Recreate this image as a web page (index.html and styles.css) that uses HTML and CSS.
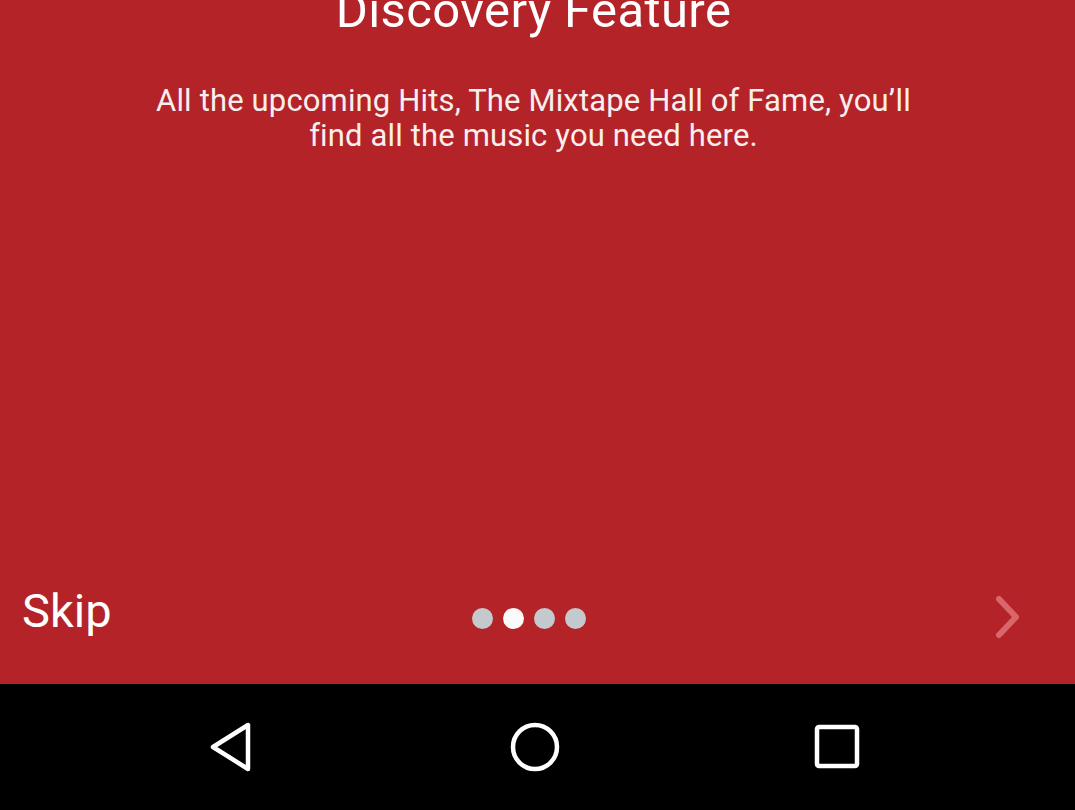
FILE: index.html
```html
<!DOCTYPE html>
<html>
<head>
<meta charset="utf-8">
<link rel="stylesheet" href="styles.css">
</head>
<body>
<div class="screen">
  <main class="slide">
    <h1 class="title">Discovery Feature</h1>
    <p class="desc">All the upcoming Hits, The Mixtape Hall of Fame, you’ll<br>find all the music you need here.</p>
  </main>
  <div class="footer">
    <span class="skip">Skip</span>
    <div class="dots">
      <span class="dot"></span>
      <span class="dot active"></span>
      <span class="dot"></span>
      <span class="dot"></span>
    </div>
    <svg class="next" width="30" height="46" viewBox="0 0 30 46"><path d="M6 5 L23 23 L6 41" fill="none" stroke="currentColor" stroke-width="6" stroke-linecap="round" stroke-linejoin="round"/></svg>
  </div>
  <nav class="navbar">
    <svg class="nav-icon" width="50" height="52" viewBox="0 0 50 52"><path d="M41 4 L41 48 L6 26 Z" fill="none" stroke="#fff" stroke-width="4.5" stroke-linejoin="round"/></svg>
    <svg class="nav-icon" width="52" height="52" viewBox="0 0 52 52"><circle cx="26" cy="26" r="22" fill="none" stroke="#fff" stroke-width="4.5"/></svg>
    <svg class="nav-icon" width="50" height="50" viewBox="0 0 50 50"><rect x="5" y="5" width="40" height="39" rx="2" fill="none" stroke="#fff" stroke-width="4.5"/></svg>
  </nav>
</div>
</body>
</html>
```
FILE: styles.css
```css
html, body {
  margin: 0;
  padding: 0;
  background: #000;
}
.screen {
  width: 1075px;
  height: 810px;
  display: flex;
  flex-direction: column;
  font-family: Roboto, "Noto Sans", sans-serif;
  color: #fff;
  overflow: hidden;
}
.slide {
  background: #b32328;
  height: 574px;
  display: flex;
  flex-direction: column;
  align-items: center;
  padding-right: 8px;
}
.title {
  margin: -19px 0 0;
  font-size: 49px;
  font-weight: 400;
  line-height: 60px;
  letter-spacing: 0.4px;
}
.desc {
  margin: 42px 0 0;
  font-size: 31px;
  line-height: 35px;
  text-align: center;
  letter-spacing: 0.15px;
  color: #f8eeee;
}
.footer {
  background: #b32328;
  height: 110px;
  display: flex;
  align-items: flex-start;
  position: relative;
}
.skip {
  margin: 9px 0 0 22px;
  font-size: 47px;
  line-height: 56px;
}
.dots {
  position: absolute;
  left: 472px;
  top: 34px;
  display: flex;
  gap: 10px;
}
.dot {
  width: 21px;
  height: 21px;
  border-radius: 50%;
  background: #c4c9ce;
}
.dot.active {
  background: #fafafa;
}
.next {
  margin: 20px 52px 0 auto;
  color: #d8666a;
}
.navbar {
  height: 126px;
  background: #000;
  display: flex;
  align-items: center;
  justify-content: space-between;
  padding: 0 213px 0 207px;
}
.nav-icon {
  display: block;
}
```
